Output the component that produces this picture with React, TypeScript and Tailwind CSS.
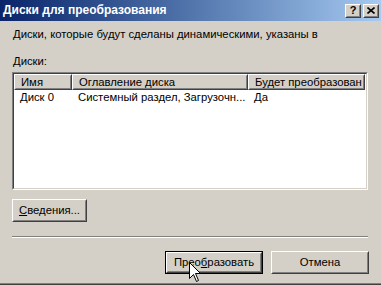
import React from "react";

const raised =
  "border border-t-white border-l-white border-b-[#404040] border-r-[#404040] bg-[#d4d0c8]";
const raisedInner = "border border-t-[#d4d0c8] border-l-[#d4d0c8] border-b-[#808080] border-r-[#808080]";

function CaptionButton({ children }: { children: React.ReactNode }) {
  return (
    <div className={`w-[16px] h-[14px] ${raised}`}>
      <div className={`w-full h-full flex items-center justify-center ${raisedInner}`}>{children}</div>
    </div>
  );
}

function Button({
  label,
  width,
  isDefault,
}: {
  label: React.ReactNode;
  width: string;
  isDefault?: boolean;
}) {
  return (
    <div className={`${width} h-[23px] ${isDefault ? "border border-black" : ""}`}>
      <div className={`w-full h-full ${raised}`}>
        <div className={`w-full h-full flex items-center justify-center ${raisedInner}`}>{label}</div>
      </div>
    </div>
  );
}

function HeaderCell({ text, width }: { text: string; width: string }) {
  return (
    <div className={`${width} h-[16px] shrink-0 ${raised}`}>
      <div className={`w-full h-full pl-[5px] flex items-center overflow-hidden whitespace-nowrap ${raisedInner}`}>
        {text}
      </div>
    </div>
  );
}

export default function App() {
  return (
    <div
      className="relative w-[381px] h-[285px] overflow-hidden bg-[#d4d0c8] text-[11.3px] leading-[13px] text-black flex flex-col"
      style={{ fontFamily: '"Liberation Sans", Arial, sans-serif' }}
    >
      <div className="flex flex-1 min-h-0">
        <div className="flex-1 flex flex-col border-b border-b-[#808080]">
          {/* title bar */}
          <div className="h-[21px] shrink-0 flex items-center justify-between bg-gradient-to-r from-[#0a246a] to-[#a6caf0] pl-[3px] pr-[2px]">
            <span className="text-white font-bold text-[12px]">Диски для преобразования</span>
            <div className="flex gap-[2px]">
              <CaptionButton>
                <span className="font-bold text-[11px] leading-none">?</span>
              </CaptionButton>
              <CaptionButton>
                <svg width="8" height="7" viewBox="0 0 8 7">
                  <path d="M0.5 0.5 L7.5 6.5 M7.5 0.5 L0.5 6.5" stroke="black" strokeWidth="1.6" />
                </svg>
              </CaptionButton>
            </div>
          </div>

          <div className="flex flex-col px-[13px] pt-[7px]">
            <div>Диски, которые будут сделаны динамическими, указаны в</div>
            <div className="mt-[14px]">Диски:</div>

            {/* list view */}
            <div className="mt-[4px] -ml-[1px] w-[356px] h-[118px] border border-t-[#808080] border-l-[#808080] border-b-white border-r-white">
              <div className="w-full h-full bg-white border border-t-[#404040] border-l-[#404040] border-b-[#d4d0c8] border-r-[#d4d0c8]">
                <div className="flex">
                  <HeaderCell text="Имя" width="w-[58px]" />
                  <HeaderCell text="Оглавление диска" width="w-[176px]" />
                  <HeaderCell text="Будет преобразован" width="w-[117px]" />
                </div>
                <div className="flex h-[15px] items-center whitespace-nowrap">
                  <div className="w-[58px] pl-[6px]">Диск 0</div>
                  <div className="w-[176px] pl-[6px]">Системный раздел, Загрузочн...</div>
                  <div className="w-[117px] pl-[6px]">Да</div>
                </div>
              </div>
            </div>

            <div className="mt-[9px] -ml-[1px]">
              <Button
                width="w-[75px]"
                label={
                  <span>
                    <span className="underline">С</span>ведения...
                  </span>
                }
              />
            </div>

            <div className="mt-[14px] -ml-[1px] w-[356px] border-t border-t-[#808080] border-b border-b-white" />

            <div className="mt-[13px] flex justify-end gap-[8px] mr-[-1px]">
              <Button
                width="w-[98px]"
                isDefault
                label={
                  <span>
                    Прео<span className="underline">б</span>разовать
                  </span>
                }
              />
              <Button width="w-[98px]" label="Отмена" />
            </div>
          </div>
        </div>
        <div className="w-[1px] bg-[#808080]" />
        <div className="w-[1px] bg-[#404040]" />
      </div>
      <div className="h-[1px] bg-[#404040]" />

      {/* mouse pointer */}
      <svg
        className="absolute left-[189px] top-[262px]"
        width="13"
        height="21"
        viewBox="0 0 13 21"
      >
        <path
          d="M0.5 0.5 L0.5 16.5 L4.5 12.5 L7.5 19.5 L9.5 18.5 L6.5 11.5 L11.5 11.5 Z"
          fill="white"
          stroke="black"
          strokeWidth="1"
        />
      </svg>
    </div>
  );
}
